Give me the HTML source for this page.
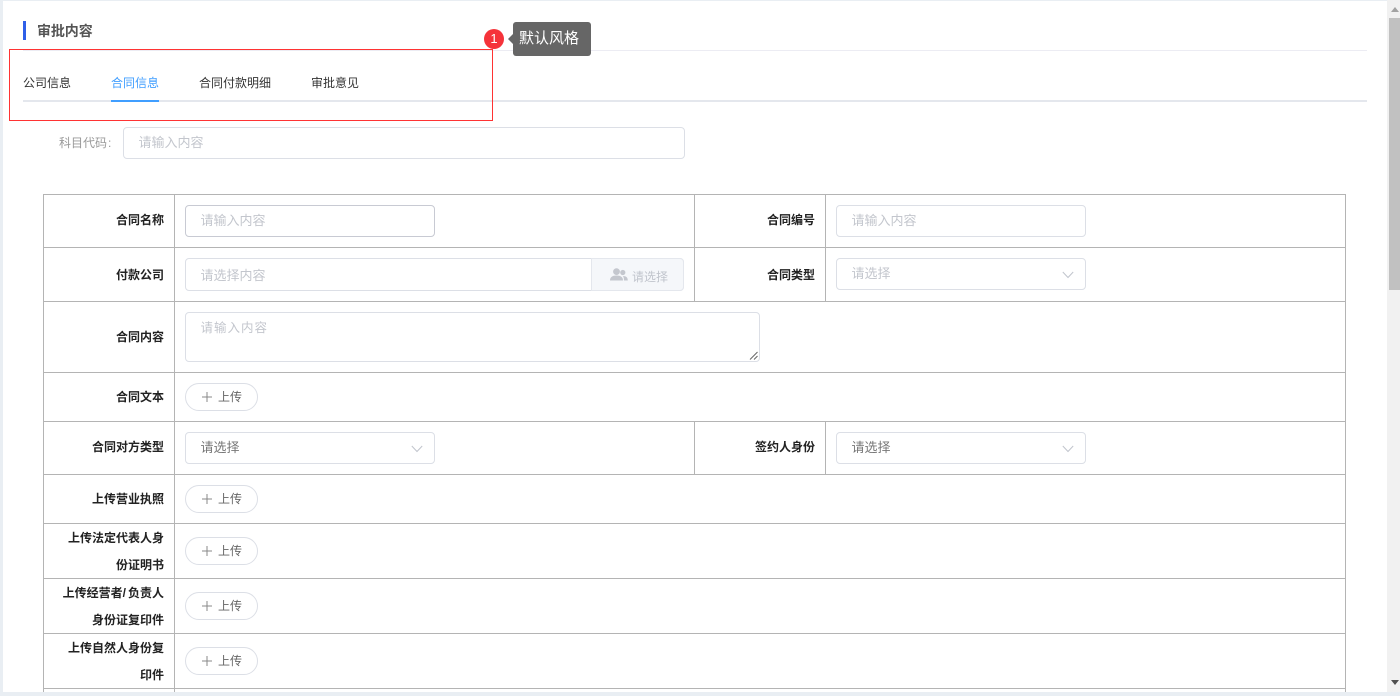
<!DOCTYPE html>
<html lang="zh"><head><meta charset="utf-8"><title>审批内容</title>
<style>
html,body{margin:0;padding:0;width:1400px;height:696px;overflow:hidden;background:#e9eef3;font-family:"Liberation Sans","Noto Sans CJK SC",sans-serif}
#p{position:absolute;left:3px;top:1px;width:1384px;height:691px;background:#fff}
.a,.l,.i,.t,.h,.v,.u{position:absolute;box-sizing:border-box;white-space:nowrap}
.h{background:#b4b4b4;height:1px;left:43px}
.v{background:#b4b4b4;width:1px}
.l{font-size:12px;font-weight:700;color:#222;text-align:right;right:1236px;line-height:20px}
.i{border:1px solid #dcdfe6;border-radius:4px;background:#fff;font-size:13px;line-height:30px;color:#c3c6cd;padding-left:14.5px;height:32px}
.t{font-size:12px;line-height:16px;color:#333;top:75px}
.u{left:185px;width:73px;height:28px;border:1px solid #dcdfe6;border-radius:14px;font-size:12px;line-height:26px;color:#666;background:#fff}
.u svg{position:absolute;left:15px;top:7px}
.u span{position:absolute;left:32px;top:0}
.c{position:absolute;right:11px;top:12px}
</style></head><body>
<div id="p"></div>

<div class="a" style="left:23px;top:21px;width:3px;height:19px;background:#2f5fe8"></div>
<div class="a" style="left:37px;top:22px;font-size:14px;line-height:18px;font-weight:700;color:#555;letter-spacing:-.1px">审批内容</div>
<div class="a" style="left:23px;top:50px;width:1344px;height:1px;background:#ececf3"></div>

<div class="t" style="left:23px">公司信息</div>
<div class="t" style="left:111px;color:#409eff">合同信息</div>
<div class="t" style="left:199px">合同付款明细</div>
<div class="t" style="left:311px">审批意见</div>
<div class="a" style="left:23px;top:100px;width:1344px;height:2px;background:#e4e7ed"></div>
<div class="a" style="left:111px;top:100px;width:48px;height:2px;background:#409eff"></div>

<div class="a" style="left:9px;top:49px;width:484px;height:72px;border:1px solid #f33"></div>
<div class="a" style="left:484px;top:29px;width:20px;height:20px;border-radius:50%;background:#f5333a;color:#fff;font-size:13px;line-height:20px;text-align:center">1</div>
<div class="a" style="left:513px;top:22px;width:78px;height:34px;border-radius:3px;background:#666;color:#fff;font-size:15px;line-height:33px;padding-left:6px">默认风格</div>
<div class="a" style="left:508px;top:34px;width:0;height:0;border:5px solid transparent;border-left:0;border-right-color:#666"></div>

<div class="a" style="left:59px;top:135px;font-size:12px;line-height:16px;color:#999">科目代码<span style="margin-left:1px">:</span></div>
<div class="i" style="left:123px;top:127px;width:562px">请输入内容</div>

<!-- table lines -->
<div class="h" style="top:194px;width:1303px"></div>
<div class="h" style="top:247px;width:1303px"></div>
<div class="h" style="top:301px;width:1303px"></div>
<div class="h" style="top:372px;width:1303px"></div>
<div class="h" style="top:421px;width:1303px"></div>
<div class="h" style="top:474px;width:1303px"></div>
<div class="h" style="top:523px;width:1303px"></div>
<div class="h" style="top:578px;width:1303px"></div>
<div class="h" style="top:633px;width:1303px"></div>
<div class="h" style="top:688px;width:1303px"></div>
<div class="v" style="left:43px;top:194px;height:498px"></div>
<div class="v" style="left:174px;top:194px;height:498px"></div>
<div class="v" style="left:1345px;top:194px;height:498px"></div>
<div class="v" style="left:694px;top:194px;height:107px"></div>
<div class="v" style="left:825px;top:194px;height:107px"></div>
<div class="v" style="left:694px;top:421px;height:53px"></div>
<div class="v" style="left:825px;top:421px;height:53px"></div>

<!-- row labels -->
<div class="l" style="top:210px">合同名称</div>
<div class="l" style="top:265px">付款公司</div>
<div class="l" style="top:327px">合同内容</div>
<div class="l" style="top:387px">合同文本</div>
<div class="l" style="top:437px">合同对方类型</div>
<div class="l" style="top:489px">上传营业执照</div>
<div class="l" style="top:525px;line-height:27px">上传法定代表人身<br>份证明书</div>
<div class="l" style="top:580px;line-height:27px">上传经营者<span style="letter-spacing:2px">/</span>负责人<br>身份证复印件</div>
<div class="l" style="top:635px;line-height:27px">上传自然人身份复<br>印件</div>
<div class="l" style="top:210px;right:585px">合同编号</div>
<div class="l" style="top:265px;right:585px">合同类型</div>
<div class="l" style="top:437px;right:585px">签约人身份</div>

<!-- fields -->
<div class="i" style="left:185px;top:205px;width:250px;border-color:#c8cad3">请输入内容</div>
<div class="i" style="left:836px;top:205px;width:250px">请输入内容</div>
<div class="i" style="left:185px;top:258px;width:499px;height:33px;line-height:33px">请选择内容</div>
<div class="a" style="left:591px;top:258px;width:93px;height:33px;background:#f5f7fa;border:1px solid #e4e7ed;border-radius:0 4px 4px 0;font-size:12px;line-height:36px;color:#c0c4cc;padding-left:40px">请选择
<svg style="position:absolute;left:18px;top:9px" width="18" height="14" viewBox="0 0 18 14"><circle cx="6.500" cy="3.600" r="3.400" fill="#c4c7ce"/><path d="M0 12.500c0-3.500 2.500-5 6.500-5s6.500 1.500 6.500 5z" fill="#c4c7ce"/><circle cx="12.800" cy="4.500" r="2.600" fill="#c4c7ce"/><path d="M14 12.500h3.800c0-3-1.500-4.500-5-4.500 1 1 1.200 2.800 1.200 4.500z" fill="#c4c7ce"/></svg></div>
<div class="i" style="left:836px;top:258px;width:250px;line-height:30px">请选择<svg class="c" width="12" height="8" viewBox="0 0 12 8"><path d="M.8 1l5.200 5.500L11.200 1" fill="none" stroke="#c0c4cc"/></svg></div>
<div class="i" style="left:185px;top:312px;width:575px;height:50px;font-size:12.500px;line-height:30px;letter-spacing:1px">请输入内容
<svg style="position:absolute;right:1px;bottom:1px" width="9" height="9" viewBox="0 0 9 9"><path d="M1 8.500L8.500 1M5 8.500L8.500 5" stroke="#666" fill="none"/></svg></div>
<div class="i" style="left:185px;top:432px;width:250px;color:#777;line-height:29px">请选择<svg class="c" width="12" height="8" viewBox="0 0 12 8"><path d="M.8 1l5.200 5.500L11.200 1" fill="none" stroke="#c0c4cc"/></svg></div>
<div class="i" style="left:836px;top:432px;width:250px;color:#777;line-height:29px">请选择<svg class="c" width="12" height="8" viewBox="0 0 12 8"><path d="M.8 1l5.200 5.500L11.200 1" fill="none" stroke="#c0c4cc"/></svg></div>

<!-- upload buttons -->
<div class="u" style="top:383px"><svg width="12" height="12" viewBox="0 0 12 12"><path d="M1 6h10M6 1v10" stroke="#888"/></svg><span>上传</span></div>
<div class="u" style="top:485px"><svg width="12" height="12" viewBox="0 0 12 12"><path d="M1 6h10M6 1v10" stroke="#888"/></svg><span>上传</span></div>
<div class="u" style="top:537px"><svg width="12" height="12" viewBox="0 0 12 12"><path d="M1 6h10M6 1v10" stroke="#888"/></svg><span>上传</span></div>
<div class="u" style="top:592px"><svg width="12" height="12" viewBox="0 0 12 12"><path d="M1 6h10M6 1v10" stroke="#888"/></svg><span>上传</span></div>
<div class="u" style="top:647px"><svg width="12" height="12" viewBox="0 0 12 12"><path d="M1 6h10M6 1v10" stroke="#888"/></svg><span>上传</span></div>

<!-- page bottom strip and scrollbar -->
<div class="a" style="left:0;top:692px;width:1400px;height:4px;background:#e9eef3"></div>
<div class="a" style="left:1387px;top:0;width:13px;height:692px;background:#f1f1f1"></div>
<div class="a" style="left:1389px;top:18px;width:11px;height:272px;background:#c1c1c1"></div>
<svg style="position:absolute;left:1391px;top:7px" width="8" height="6" viewBox="0 0 8 6"><path d="M4 0l4 5H0z" fill="#a3a3a3"/></svg>
<svg style="position:absolute;left:1391px;top:680px" width="8" height="6" viewBox="0 0 8 6"><path d="M0 0h8L4 5z" fill="#505050"/></svg>
</body></html>
